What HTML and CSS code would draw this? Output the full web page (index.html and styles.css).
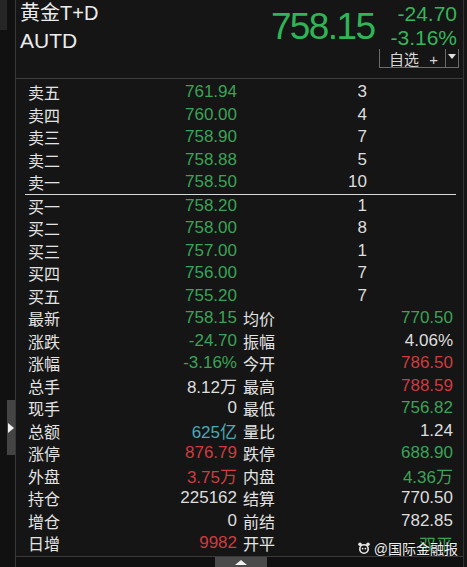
FILE: index.html
```html
<!DOCTYPE html>
<html lang="zh-CN">
<head>
  <meta charset="UTF-8" />
  <title>黄金T+D</title>
  <link rel="stylesheet" href="styles.css">
</head>
<body>
  <div class="side">
    <div class="side-top"></div>
    <div class="side-bar">
      <div class="thumb"><span class="arrow-right"></span></div>
    </div>
  </div>

  <div class="main">
    <header>
      <div class="names">
        <div class="name">黄金T+D</div>
        <div class="code">AUTD</div>
      </div>
      <div class="quote">
        <div class="quote-row">
          <span class="last">758.15</span>
          <div class="chg">
            <span>-24.70</span>
            <span>-3.16%</span>
          </div>
        </div>
        <div class="fav">
          <span class="fav-btn">自选 <i>+</i></span>
          <span class="fav-drop"><span class="arrow-down"></span></span>
        </div>
      </div>
    </header>

    <div class="book">
      <span class="lbl">卖五</span><span class="green">761.94</span><span>3</span>
      <span class="lbl">卖四</span><span class="green">760.00</span><span>4</span>
      <span class="lbl">卖三</span><span class="green">758.90</span><span>7</span>
      <span class="lbl">卖二</span><span class="green">758.88</span><span>5</span>
      <span class="lbl">卖一</span><span class="green">758.50</span><span>10</span>
    </div>
    <div class="sep"></div>
    <div class="book">
      <span class="lbl">买一</span><span class="green">758.20</span><span>1</span>
      <span class="lbl">买二</span><span class="green">758.00</span><span>8</span>
      <span class="lbl">买三</span><span class="green">757.00</span><span>1</span>
      <span class="lbl">买四</span><span class="green">756.00</span><span>7</span>
      <span class="lbl">买五</span><span class="green">755.20</span><span>7</span>
    </div>

    <div class="stats">
      <span class="lbl">最新</span><span class="green">758.15</span><span class="lbl2">均价</span><span class="green">770.50</span>
      <span class="lbl">涨跌</span><span class="green">-24.70</span><span class="lbl2">振幅</span><span>4.06%</span>
      <span class="lbl">涨幅</span><span class="green">-3.16%</span><span class="lbl2">今开</span><span class="red">786.50</span>
      <span class="lbl">总手</span><span>8.12万</span><span class="lbl2">最高</span><span class="red">788.59</span>
      <span class="lbl">现手</span><span>0</span><span class="lbl2">最低</span><span class="green">756.82</span>
      <span class="lbl">总额</span><span class="teal">625亿</span><span class="lbl2">量比</span><span>1.24</span>
      <span class="lbl">涨停</span><span class="red">876.79</span><span class="lbl2">跌停</span><span class="green">688.90</span>
      <span class="lbl">外盘</span><span class="red">3.75万</span><span class="lbl2">内盘</span><span class="green">4.36万</span>
      <span class="lbl">持仓</span><span>225162</span><span class="lbl2">结算</span><span>770.50</span>
      <span class="lbl">增仓</span><span>0</span><span class="lbl2">前结</span><span>782.85</span>
      <span class="lbl">日增</span><span class="red">9982</span><span class="lbl2">开平</span><span class="green">双平</span>
    </div>

    <div class="hscroll">
      <div class="hthumb"><span class="arrow-up"></span></div>
    </div>

    <div class="mark">
      <svg width="14" height="14" viewBox="0 0 14 14">
        <circle cx="7" cy="8" r="4.2" fill="none" stroke="#e8e8e8" stroke-width="1.6"/>
        <circle cx="3" cy="3.2" r="1.8" fill="#e8e8e8"/>
        <circle cx="11" cy="3.2" r="1.8" fill="#e8e8e8"/>
        <circle cx="5.6" cy="7.6" r="0.9" fill="#e8e8e8"/>
        <circle cx="8.4" cy="7.6" r="0.9" fill="#e8e8e8"/>
      </svg>
      <span>@国际金融报</span>
    </div>
  </div>
</body>
</html>
```

FILE: styles.css
```css
body {
  margin: 0;
  width: 467px;
  height: 567px;
  overflow: hidden;
  background-color: #151515;
  color: #dedede;
  font-family: 'Liberation Sans', 'Noto Sans CJK SC', sans-serif;
  display: flex;
}

.side {
  width: 15px;
  border-right: 1px solid #383838;
  background-color: #111;
  display: flex;
  flex-direction: column;
}

.side-top {
  height: 30px;
  width: 7px;
  background-color: #262626;
}

.side-bar {
  margin-left: 7px;
  margin-top: 370px;
  width: 8px;
  height: 55px;
  background-color: #222;
}

.thumb {
  height: 55px;
  background-color: #444;
  display: flex;
  align-items: center;
  justify-content: center;
}

.arrow-right {
  width: 0;
  height: 0;
  border-top: 5px solid transparent;
  border-bottom: 5px solid transparent;
  border-left: 6px solid #f0f0f0;
}

.main {
  position: relative;
  width: 447px;
  border-right: 1px solid #333;
  display: flex;
  flex-direction: column;
}

header {
  height: 79px;
  border-bottom: 1px solid #3c3c3c;
  display: flex;
  justify-content: space-between;
  padding-left: 4px;
  box-sizing: border-box;
}

.names {
  font-size: 20px;
  line-height: 26px;
  color: #ececec;
}

.code {
  font-size: 21px;
  margin-top: 2px;
}

.quote {
  display: flex;
  flex-direction: column;
  align-items: flex-end;
  padding-right: 6px;
}

.quote-row {
  display: flex;
  align-items: flex-start;
}

.last {
  font-size: 37px;
  line-height: 40px;
  margin-top: 7px;
  letter-spacing: -1.6px;
  color: #2fb457;
}

.chg {
  display: flex;
  flex-direction: column;
  margin-left: 16px;
  margin-top: 2px;
  font-size: 21px;
  line-height: 24px;
  color: #34b65a;
  text-align: right;
}

.fav {
  display: flex;
  align-items: stretch;
  height: 19px;
  margin-top: -1px;
  margin-right: -2px;
}

.fav-btn {
  width: 66px;
  border-left: 1px solid #6a6a6a;
  border-bottom: 1px solid #6a6a6a;
  font-size: 15px;
  line-height: 21px;
  padding-left: 9px;
  box-sizing: border-box;
  color: #d8d8d8;
}

.fav-btn i {
  font-style: normal;
  margin-left: 6px;
}

.fav-drop {
  width: 14px;
  border-left: 1px solid #6a6a6a;
  border-right: 1px solid #6a6a6a;
  border-bottom: 1px solid #6a6a6a;
  display: flex;
  justify-content: center;
  padding-top: 5px;
  box-sizing: border-box;
}

.arrow-down {
  width: 0;
  height: 0;
  border-left: 4px solid transparent;
  border-right: 4px solid transparent;
  border-top: 5px solid #e0e0e0;
}

.book {
  display: grid;
  grid-template-columns: 60px 149px 130px;
  grid-auto-rows: 22.5px;
  padding-left: 12px;
  font-size: 17px;
  align-items: center;
}

header + .book {
  margin-top: 2px;
}

.book span,
.stats span {
  text-align: right;
}

.book .lbl,
.stats .lbl,
.stats .lbl2 {
  text-align: left;
  font-size: 16px;
  color: #e4e4e4;
}

.sep {
  height: 1px;
  margin: 0 7px 0 9px;
  background-color: #d8d8d8;
}

.stats {
  display: grid;
  grid-template-columns: 60px 149px 66px 150px;
  grid-auto-rows: 22.5px;
  padding-left: 12px;
  font-size: 17px;
  align-items: center;
}

.stats .lbl2 {
  padding-left: 6px;
}

.green { color: #3aa357; }
.red { color: #cf3b40; }
.teal { color: #4aa9b6; }

.hscroll {
  margin-top: auto;
  height: 10px;
  border-top: 1px solid #3a3a3a;
  background-color: #101010;
  padding-left: 199px;
}

.hthumb {
  width: 52px;
  height: 10px;
  background-color: #4a4a4a;
  display: flex;
  justify-content: center;
  align-items: center;
}

.arrow-up {
  width: 0;
  height: 0;
  border-left: 6px solid transparent;
  border-right: 6px solid transparent;
  border-bottom: 5px solid #f0f0f0;
}

.mark {
  position: absolute;
  right: 5px;
  bottom: 9px;
  display: flex;
  align-items: center;
  gap: 3px;
  font-size: 14px;
  color: #f0f0f0;
  text-shadow: 0 0 2px #000;
}
```
